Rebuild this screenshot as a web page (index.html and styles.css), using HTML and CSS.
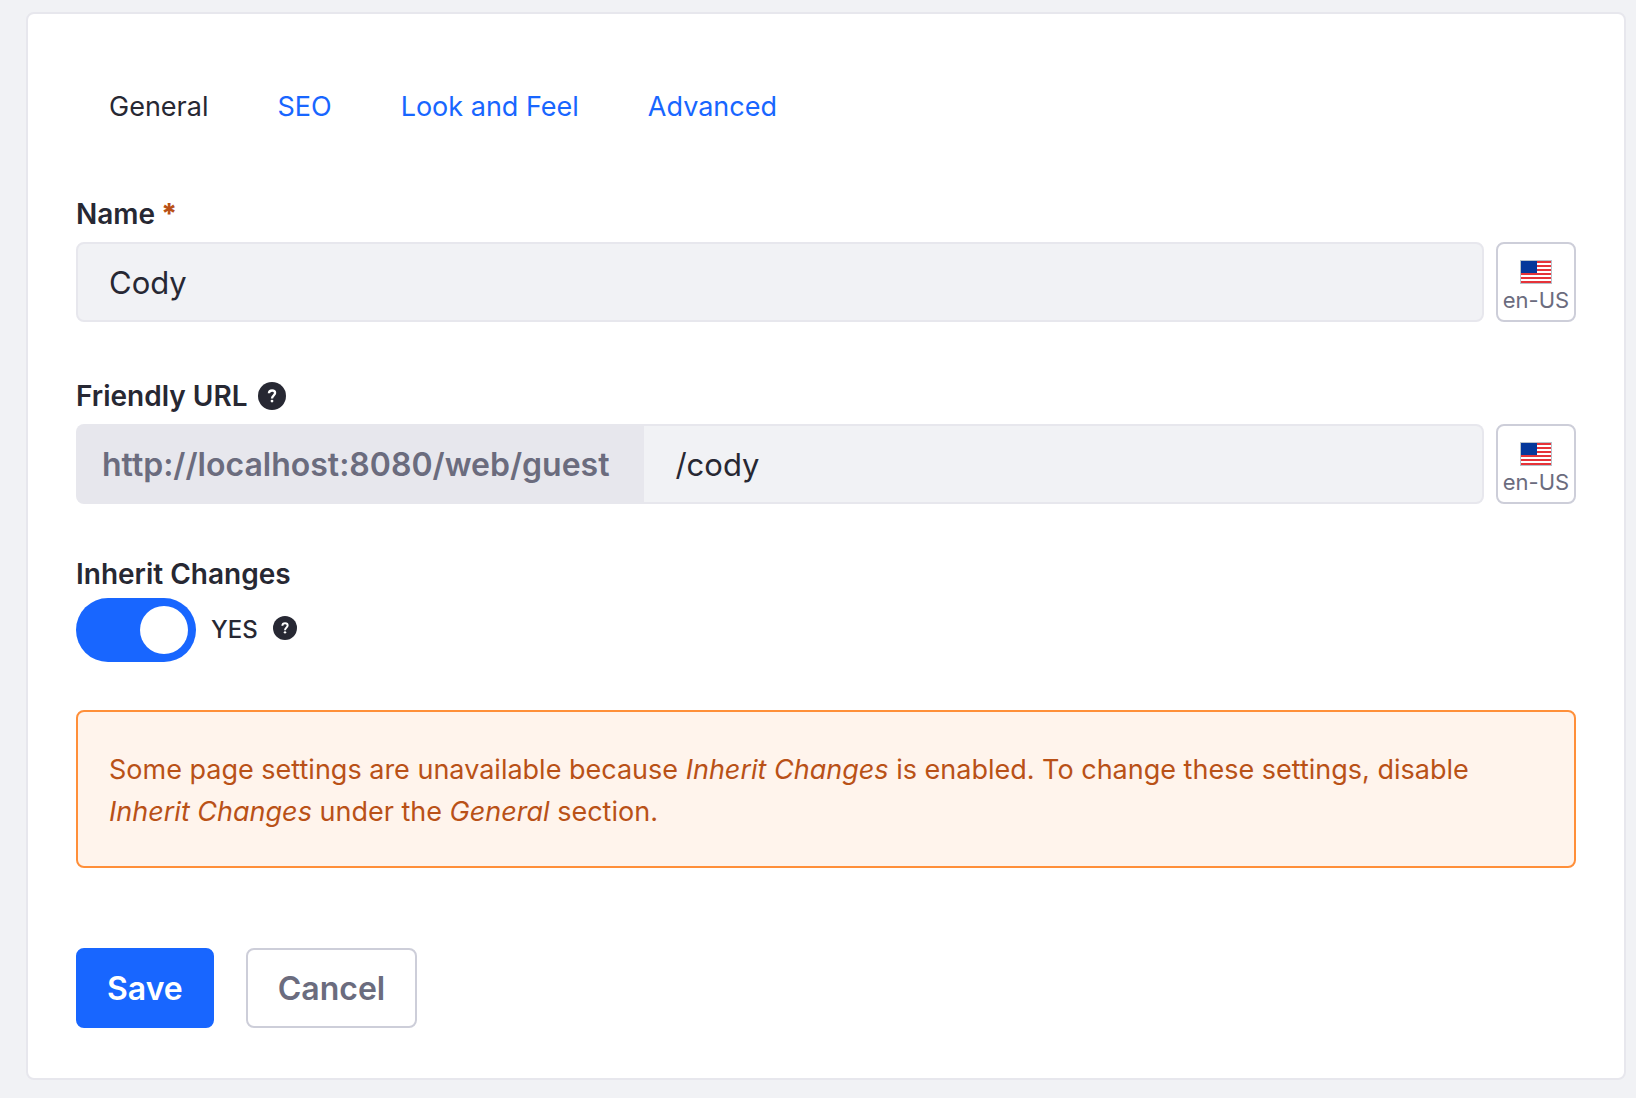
FILE: index.html
```html
<!DOCTYPE html>
<html lang="en">
<head>
<meta charset="utf-8">
<meta name="viewport" content="width=device-width, initial-scale=1">
<title>General</title>
<link rel="stylesheet" href="styles.css">
</head>
<body>
<svg class="sprite" aria-hidden="true">
  <symbol id="flag-en-us" viewBox="0 0 32 24">
    <path fill="#b9c3cc" d="M0 0h32v24H0z"/>
    <path fill="#fff" d="M1 1h30v22H1z"/>
    <path stroke="#e63339" stroke-width="2" d="M1 2h30M1 6h30M1 10h30M1 14h30M1 18h30M1 22h30"/>
    <path fill="#05389b" d="M1 1h16v12H1z"/>
  </symbol>
  <symbol id="help" viewBox="0 0 28 28">
    <circle cx="14" cy="14" r="14" fill="#272833"/>
    <path fill="none" stroke="#fff" stroke-width="2.3" d="M10.9 11.3C11 9.400 12.300 8.500 14.100 8.500C15.900 8.500 17.100 9.500 17.100 11.100C17.100 13.400 14 13.300 14 16.600"/>
    <circle cx="14" cy="19.100" r="1.400" fill="#fff"/>
  </symbol>
</svg>
<main class="card">
  <nav class="tabs">
    <a class="tab tab-active" href="#general" aria-current="page">General</a>
    <a class="tab" href="#seo">SEO</a>
    <a class="tab" href="#look-and-feel">Look and Feel</a>
    <a class="tab" href="#advanced">Advanced</a>
  </nav>
  <form class="form">
    <div class="field">
      <label class="label" for="name">Name <span class="required">*</span></label>
      <div class="row">
        <input class="input" id="name" type="text" value="Cody">
        <button class="locale" type="button"><svg class="flag" aria-hidden="true"><use href="#flag-en-us"/></svg><span>en-US</span></button>
      </div>
    </div>
    <div class="field">
      <label class="label label-help" for="url">Friendly URL <svg class="help" aria-hidden="true"><use href="#help"/></svg></label>
      <div class="row">
        <div class="group">
          <span class="prefix">http://localhost:8080/web/guest</span>
          <input class="input input-joined" id="url" type="text" value="/cody">
        </div>
        <button class="locale" type="button"><svg class="flag" aria-hidden="true"><use href="#flag-en-us"/></svg><span>en-US</span></button>
      </div>
    </div>
    <div class="field field-toggle">
      <label class="label label-toggle" for="inherit">Inherit Changes</label>
      <div class="toggle-row">
        <input class="toggle" id="inherit" type="checkbox" role="switch" checked>
        <span class="state">YES</span>
        <svg class="help help-small" aria-hidden="true"><use href="#help"/></svg>
      </div>
    </div>
    <p class="alert">Some page settings are unavailable because <em>Inherit Changes</em> is enabled. To change these settings, disable <em>Inherit Changes</em> under the <em>General</em> section.</p>
    <div class="actions">
      <button class="button button-primary" type="submit">Save</button>
      <button class="button" type="button">Cancel</button>
    </div>
  </form>
</main>
</body>
</html>
```
FILE: styles.css
```css
* {
  box-sizing: border-box;
}

body {
  margin: 0;
  padding: 12px 10px 18px 26px;
  background: #f1f2f5;
  color: #272833;
  font-family: Inter, "Liberation Sans", sans-serif;
  font-size: 27px;
  line-height: 42px;
}

button,
input {
  margin: 0;
  font: inherit;
}

.sprite {
  display: none;
}

.card {
  padding: 48px 48px 50px;
  background: #fff;
  border: 2px solid #e7e7ed;
  border-radius: 8px;
}

.tabs {
  display: flex;
  gap: 3px;
  padding: 24px 0 65px;
}

.tab {
  padding: 0 33px;
  color: #1866ff;
  text-decoration: none;
}

.tab-active {
  color: inherit;
}

.field + .field {
  margin-top: 53px;
}

.field + .field-toggle {
  margin-top: 49px;
}

.label {
  display: flex;
  align-items: center;
  gap: 6px;
  margin-bottom: 7px;
  font-size: 28px;
  font-weight: 600;
}

.label-help {
  gap: 10px;
}

.label-toggle {
  margin-bottom: 3px;
}

.required {
  color: #b95117;
  font-weight: 800;
}

.row {
  display: flex;
  gap: 12px;
}

.group {
  display: flex;
  flex: 1;
}

.input {
  flex: 1;
  min-width: 0;
  height: 80px;
  padding: 0 31px;
  background: #f1f2f5;
  border: 2px solid #e7e7ed;
  border-radius: 8px;
  color: #272833;
  font-size: 31px;
}

.input-joined {
  border-left: 0;
  border-radius: 0 8px 8px 0;
}

.prefix {
  height: 80px;
  padding: 0 35px 0 26px;
  background: #e7e7ed;
  border-radius: 8px 0 0 8px;
  color: #6b6c7e;
  font-size: 32px;
  font-weight: 600;
  line-height: 82px;
}

.locale {
  display: flex;
  flex-direction: column;
  align-items: center;
  justify-content: center;
  gap: 3px;
  width: 80px;
  height: 80px;
  padding: 8px 0 0;
  background: #fff;
  border: 2px solid #cdced9;
  border-radius: 8px;
  color: #6b6c7e;
  font-size: 22px;
  line-height: 26px;
}

.flag {
  width: 32px;
  height: 24px;
}

.help {
  width: 28px;
  height: 28px;
}

.help-small {
  width: 24px;
  height: 24px;
  margin-bottom: 4px;
}

.toggle-row {
  display: flex;
  align-items: center;
  gap: 15px;
}

.toggle {
  display: flex;
  align-items: center;
  justify-content: flex-end;
  width: 120px;
  height: 64px;
  padding: 8px;
  appearance: none;
  background: #1866ff;
  border-radius: 32px;
}

.toggle::before {
  width: 48px;
  height: 48px;
  background: #fff;
  border-radius: 50%;
  content: "";
}

.state {
  font-size: 24px;
  font-weight: 500;
}

.alert {
  margin: 48px 0 80px;
  padding: 37px 31px 33px;
  background: #fff4ec;
  border: 2px solid #ff8f39;
  border-radius: 8px;
  color: #b95117;
}

.actions {
  display: flex;
  gap: 32px;
}

.button {
  height: 80px;
  padding: 2px 30px 0;
  background: #fff;
  border: 2px solid #cdced9;
  border-radius: 8px;
  color: #6b6c7e;
  font-size: 32px;
  font-weight: 600;
}

.button-primary {
  padding: 2px 29px 0;
  background: #1866ff;
  border-color: #1866ff;
  color: #fff;
}
```
